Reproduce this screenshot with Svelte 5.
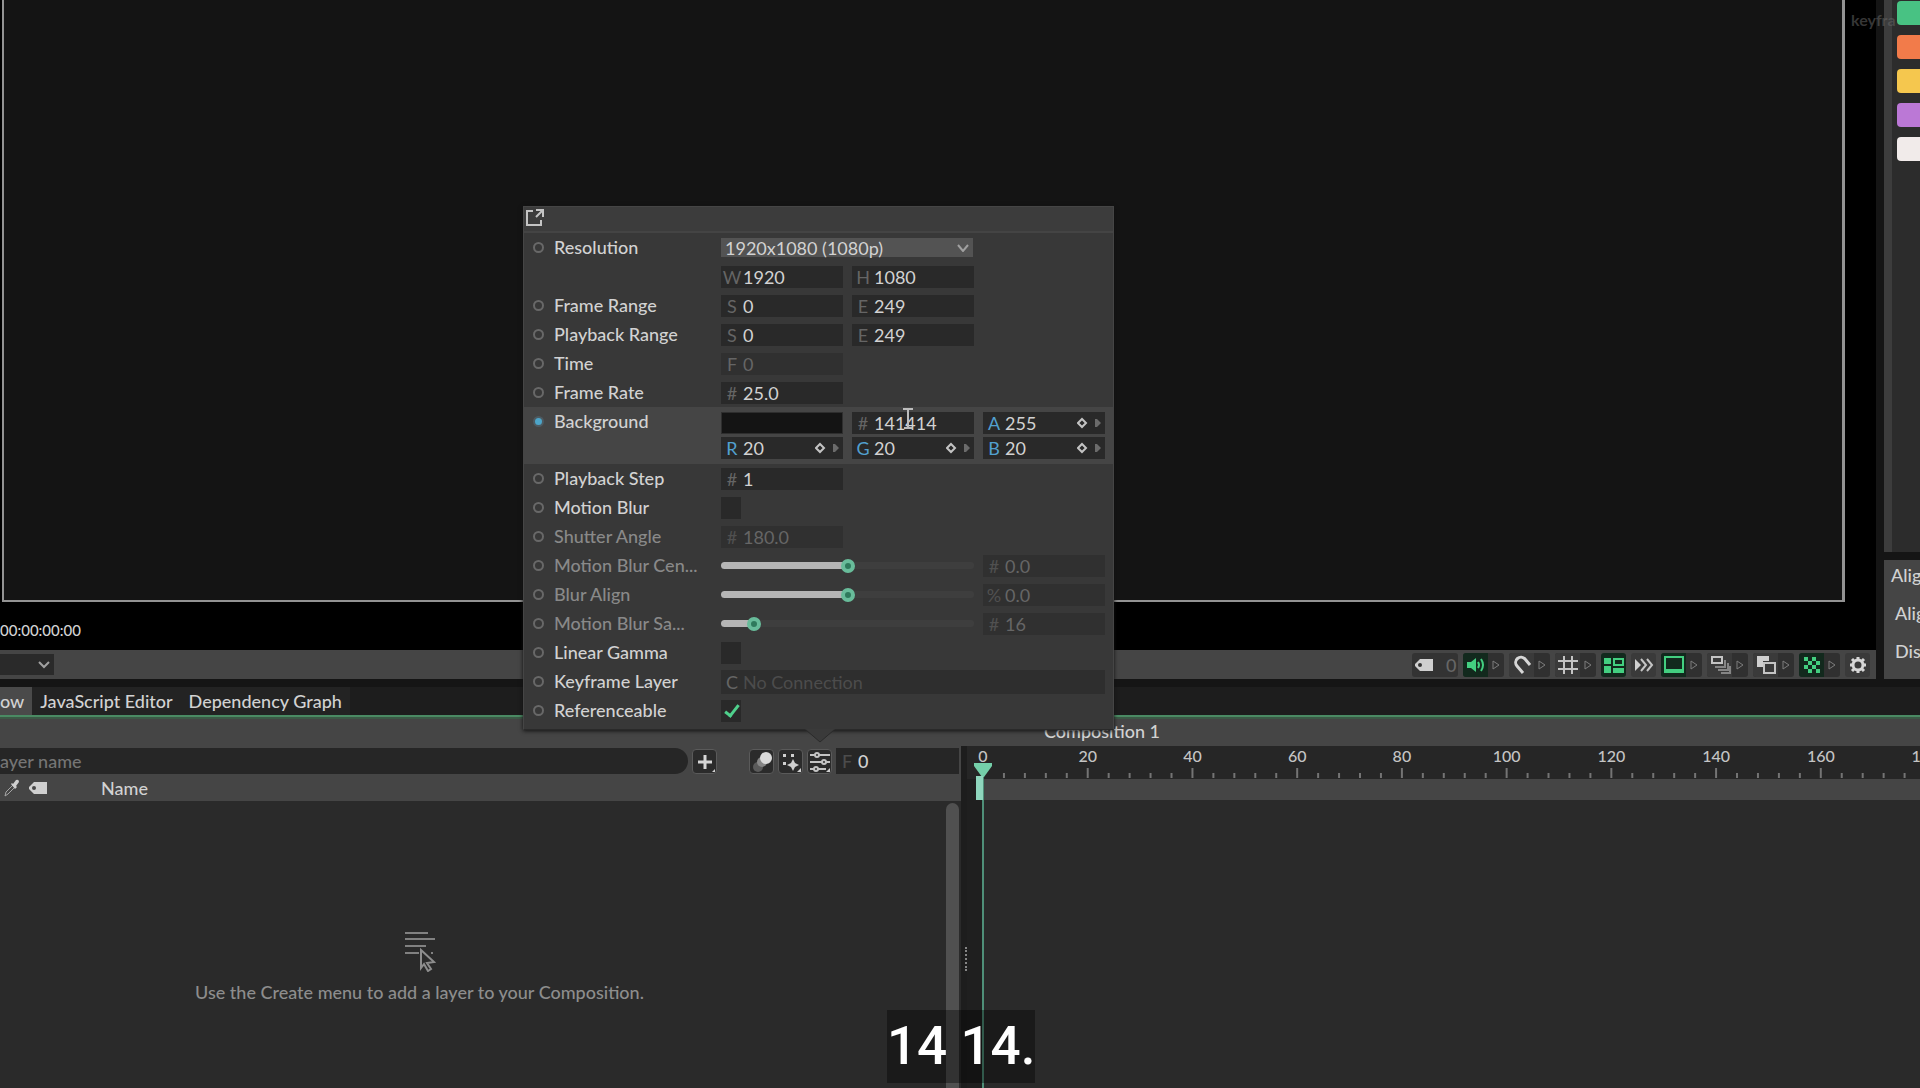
<script lang="ts">
  type Part = {
    kind: "num" | "select" | "swatch" | "check" | "slider" | "link";
    prefix?: string;
    value?: string;
    on?: boolean;
    keyed?: boolean;
    percent?: number;
  };

  type Row = {
    label: string;
    dim?: boolean;
    active?: boolean;
    lines: Part[][];
  };

  const num = (prefix: string, value: string, keyed = false): Part => ({
    kind: "num",
    prefix,
    value,
    keyed,
  });

  const rows: Row[] = [
    {
      label: "Resolution",
      lines: [[{ kind: "select", value: "1920x1080 (1080p)" }], [num("W", "1920"), num("H", "1080")]],
    },
    { label: "Frame Range", lines: [[num("S", "0"), num("E", "249")]] },
    { label: "Playback Range", lines: [[num("S", "0"), num("E", "249")]] },
    { label: "Time", lines: [[{ ...num("F", "0"), on: false }]] },
    { label: "Frame Rate", lines: [[num("#", "25.0")]] },
    {
      label: "Background",
      active: true,
      lines: [
        [{ kind: "swatch", value: "#141414" }, num("#", "141414"), num("A", "255", true)],
        [num("R", "20", true), num("G", "20", true), num("B", "20", true)],
      ],
    },
    { label: "Playback Step", lines: [[num("#", "1")]] },
    { label: "Motion Blur", lines: [[{ kind: "check", on: false }]] },
    { label: "Shutter Angle", dim: true, lines: [[num("#", "180.0")]] },
    { label: "Motion Blur Cen...", dim: true, lines: [[{ kind: "slider", percent: 50 }, num("#", "0.0")]] },
    { label: "Blur Align", dim: true, lines: [[{ kind: "slider", percent: 50 }, num("%", "0.0")]] },
    { label: "Motion Blur Sa...", dim: true, lines: [[{ kind: "slider", percent: 11 }, num("#", "16")]] },
    { label: "Linear Gamma", lines: [[{ kind: "check", on: false }]] },
    { label: "Keyframe Layer", lines: [[{ kind: "link", prefix: "C", value: "No Connection" }]] },
    { label: "Referenceable", lines: [[{ kind: "check", on: true }]] },
  ];

  const tools = [
    { name: "sound", arrow: true, on: true },
    { name: "snap", arrow: true },
    { name: "grid", arrow: true },
    { name: "layout", on: true },
    { name: "speed" },
    { name: "screen", arrow: true, on: true },
    { name: "stack", arrow: true },
    { name: "overlap", arrow: true },
    { name: "checker", arrow: true, on: true },
    { name: "gear" },
  ];

  const swatches = ["#48c283", "#f27b4a", "#f5c74e", "#bb78d6", "#f1ebea"];

  // frames that fit in the full width of the ruler
  const visibleFrames = 182;
  const ticks = Array.from({ length: 46 }, (_, i) => i * 4);
  const at = (frame: number) => `${(frame / visibleFrames) * 100}%`;
</script>

<div class="app">
  <section class="top">
    <div class="viewer">
      <div class="stage">
        <div class="frame"></div>
      </div>
      <div class="timecode">00:00:00:00</div>
      <div class="viewbar">
        <button class="zoom" aria-label="Zoom">
          <svg width="12" height="8" viewBox="0 0 12 8"><path d="M1 1l5 5 5-5" /></svg>
        </button>
        <div class="tools">
          <div class="tool tagtool">
            <svg width="20" height="14" viewBox="0 0 20 14">
              <path class="fill" fill-rule="evenodd" d="M6 1h13v12H6L1 8V6zM6 5a2 2 0 100 4 2 2 0 000-4z" />
            </svg>
            <span>0</span>
          </div>
          {#each tools as tool}
            <button class="tool" class:on={tool.on} class:arrow={tool.arrow} aria-label={tool.name}>
              <span class="glyph">
                <svg width="22" height="22" viewBox="0 0 22 22">
                  {#if tool.name === "sound"}
                    <path class="fill" d="M2 8h4l5-4v14l-5-4H2z" />
                    <path class="wave" d="M13 8q2 3 0 6M16 5q4 6 0 12" />
                  {:else if tool.name === "snap"}
                    <path class="thick" d="M12 19L6 12a4 4 0 018-7l5 6" />
                  {:else if tool.name === "grid"}
                    <path class="mid" d="M7 2v18M15 2v18M1 7h20M1 15h20" />
                  {:else if tool.name === "layout"}
                    <path class="fill" d="M1 4h7v6H1zM1 12h7v7H1zM10 14h11v5H10z" />
                    <path class="mid" d="M11 5h9v6h-9z" />
                  {:else if tool.name === "speed"}
                    <path class="fill" d="M2 5l6 6-6 6z" />
                    <path class="mid" d="M8 5l5 6-5 6M14 5l5 6-5 6" />
                  {:else if tool.name === "screen"}
                    <path class="mid" d="M2 3h18v15H2z" />
                    <path class="fill" d="M2 15h18v4H2z" />
                  {:else if tool.name === "stack"}
                    <path class="mid" d="M3 3h10v6H3z" />
                    <path class="faint" d="M6 13h10V6M9 16h10V9M12 19h9v-7" />
                  {:else if tool.name === "overlap"}
                    <path class="fill" d="M2 2h12v5H8v6H2z" />
                    <path class="mid" d="M9 9h11v10H9z" />
                  {:else if tool.name === "checker"}
                    <path
                      class="fill"
                      d="M3 3h4v4H3zM11 3h4v4h-4zM7 7h4v4H7zM15 7h4v4h-4zM3 11h4v4H3zM11 11h4v4h-4zM7 15h4v4H7zM15 15h4v4h-4z"
                    />
                  {:else}
                    <circle class="thick" cx="11" cy="11" r="5" />
                    <path class="thick" d="M11 3v3M11 16v3M3 11h3M16 11h3M5 5l2 2M15 15l2 2M5 17l2-2M15 7l2-2" />
                  {/if}
                </svg>
              </span>
              {#if tool.arrow}
                <svg class="more" width="8" height="10" viewBox="0 0 8 10"><path d="M1 1l6 4-6 4z" /></svg>
              {/if}
            </button>
          {/each}
        </div>
      </div>
    </div>
    <aside class="side">
      <div class="palette">
        {#each swatches as color}
          <button class="color" style:background={color} aria-label="Colour {color}"></button>
        {/each}
      </div>
      <div class="align">
        <div class="title">Alig</div>
        <div>Alig</div>
        <div>Dis</div>
      </div>
    </aside>
  </section>

  <section class="bottom">
    <nav class="tabs">
      <button class="tab current">ow</button>
      <button class="tab">JavaScript Editor</button>
      <button class="tab">Dependency Graph</button>
    </nav>

    <div class="panes">
      <div class="comp">Composition 1</div>
      <div class="layers">
        <div class="layerbar">
          <input class="search" type="text" placeholder="ayer name" aria-label="Layer name" />
          <button class="icon" aria-label="Create">
            <svg width="24" height="24" viewBox="0 0 24 24">
              <path class="thick" d="M12 5v14M5 12h14" /><path class="fill" d="M22 19v3h-3z" />
            </svg>
          </button>
          <button class="icon spaced" aria-label="Motion blur">
            <svg width="24" height="24" viewBox="0 0 24 24">
              <circle cx="8" cy="17" r="5" fill="#5a5a5a" stroke="none" />
              <circle cx="12" cy="12" r="5" fill="#868686" stroke="none" />
              <circle cx="16" cy="8" r="6" fill="#dadada" stroke="none" />
            </svg>
          </button>
          <button class="icon" aria-label="Particles">
            <svg width="24" height="24" viewBox="0 0 24 24">
              <path
                class="fill"
                d="M4 4h3v3H4zM12 4h3v3h-3zM4 12h3v3H4zM14 9l2 4 4 2-4 2-2 4-2-4-4-2 4-2zM22 18v4h-4z"
              />
            </svg>
          </button>
          <button class="icon" aria-label="Composition settings">
            <svg width="24" height="24" viewBox="0 0 24 24">
              <path class="mid" d="M2 5h20M2 12h20M2 19h16" />
              <circle class="knob" cx="9" cy="5" r="2" />
              <circle class="knob" cx="16" cy="12" r="2" />
              <circle class="knob" cx="8" cy="19" r="2" />
              <path class="fill" d="M22 18v4h-4z" />
            </svg>
          </button>
          <label class="num current-frame"><span>F</span><input type="text" value="0" /></label>
        </div>
        <div class="columns">
          <svg width="16" height="18" viewBox="0 0 16 18">
            <path d="M1 17l1-4 7-7 2 2-7 7z" />
            <path class="fill" d="M7 5l1-1 1 1 3-4q3-1 3 2l-3 4 1 1-2 2z" />
          </svg>
          <svg class="tag" width="20" height="14" viewBox="0 0 20 14">
            <path class="fill" fill-rule="evenodd" d="M6 1h13v12H6L1 8V6zM6 5a2 2 0 100 4 2 2 0 000-4z" />
          </svg>
          <span>Name</span>
        </div>
        <div class="list">
          <div class="empty">
            <svg width="32" height="42" viewBox="0 0 32 42">
              <path class="soft" d="M1 3h23M1 9h30M1 16h21M1 23h14M27 23h2" />
              <path class="pointer" d="M17 20l13 12-7 1 4 6-3 2-4-7-3 4z" />
            </svg>
            <p>Use the Create menu to add a layer to your Composition.</p>
          </div>
          <div class="scroll"></div>
        </div>
      </div>
      <div class="split"><i></i></div>
      <div class="timeline">
        <svg class="ruler" height="33">
          <svg x="16" width="100%" height="33" overflow="visible">
            {#each ticks as frame}
              <line x1={at(frame)} x2={at(frame)} y1={frame % 20 ? 27 : 22} y2="32" />
              {#if frame % 20 === 0}
                <text x={at(frame)} y="16">{frame}</text>
              {/if}
            {/each}
          </svg>
        </svg>
        <div class="range"></div>
        <div class="tracks"></div>
        <svg class="playhead" width="20" height="100%">
          <rect x="9" y="14" width="2" height="100%" fill="#4f8f78" />
          <path d="M1 0h18v3l-8 11H9L1 3z" fill="#74cfa9" />
          <rect x="3" y="13" width="7" height="24" fill="#8fd6bd" />
        </svg>
      </div>
    </div>
  </section>

  <div class="popup">
    <div class="pophead">
      <button aria-label="Open in window">
        <svg width="18" height="18" viewBox="0 0 18 18">
          <path class="mid" d="M7 2H1v14h14v-5M10 1h7v7M17 1l-7 7" />
        </svg>
      </button>
    </div>
    {#each rows as row}
      <div class="row" class:dim={row.dim} class:active={row.active}>
        <i class="dot"></i>
        <span class="name">{row.label}</span>
        <div class="lines">
          {#each row.lines as line}
            <div class="line">
              {#each line as part}
                {#if part.kind === "num"}
                  <label class="num" class:keyed={part.keyed} class:off={part.on === false}>
                    <span>{part.prefix}</span>
                    <input type="text" value={part.value} />
                    {#if part.keyed}
                      <svg width="24" height="12" viewBox="0 0 24 12">
                        <path class="mid" d="M5 2l4 4-4 4-4-4z" />
                        <path class="tip" d="M18 2h2l4 4-4 4h-2z" />
                      </svg>
                    {/if}
                  </label>
                {:else if part.kind === "select"}
                  <div class="select">
                    <select aria-label={row.label}><option>{part.value}</option></select>
                    <svg width="12" height="8" viewBox="0 0 12 8"><path d="M1 1l5 6 5-6" /></svg>
                  </div>
                {:else if part.kind === "swatch"}
                  <button class="swatch" style:background={part.value} aria-label="Background colour"></button>
                {:else if part.kind === "check"}
                  <input type="checkbox" checked={part.on} aria-label={row.label} />
                {:else if part.kind === "slider"}
                  <input
                    class="slider"
                    type="range"
                    value={part.percent}
                    style:--fill="{part.percent}%"
                    aria-label={row.label}
                  />
                {:else}
                  <label class="num link"><span>{part.prefix}</span><input type="text" value={part.value} /></label>
                {/if}
              {/each}
            </div>
          {/each}
        </div>
      </div>
    {/each}
    <svg class="notch" width="30" height="15" viewBox="0 0 30 15">
      <path d="M0 0h30L15 13z" fill="#3a3a3a" stroke="none" />
      <path d="M1 1l14 12L29 1" stroke="#2a2a2a" />
    </svg>
  </div>

  <svg class="cursor" width="12" height="22" viewBox="0 0 12 22">
    <path d="M1 1h10M6 1v18M2 20h8" />
  </svg>
  <div class="watermark">keyfra</div>
  <div class="caption">14 14.</div>
</div>

<style>
  :global(body) {
    background: #151515;
  }

  .app {
    position: relative;
    display: grid;
    grid-template-rows: 679fr 401fr;
    gap: 8px;
    height: 100vh;
    overflow: hidden;
    background: #151515;
    color: #d2d2d2;
    font-family: Lato, "Liberation Sans", sans-serif;
    font-size: 18px;
    font-weight: 500;
    line-height: 24px;
  }

  button,
  input,
  select {
    box-sizing: border-box;
    margin: 0;
    padding: 0;
    border: 0;
    background: none;
    color: inherit;
    font: inherit;
  }

  svg {
    display: block;
    flex: none;
    fill: none;
    stroke: #a5a5a5;
    stroke-width: 1;
  }

  .fill {
    fill: #cfcfcf;
    stroke: none;
  }

  .mid {
    stroke: #c4c4c4;
    stroke-width: 2;
  }

  .wave {
    stroke: #43cf80;
    stroke-width: 2;
  }

  .thick {
    stroke: #d6d6d6;
    stroke-width: 3;
  }

  .faint {
    stroke: #858585;
    stroke-width: 2;
  }

  .top {
    display: flex;
    min-height: 0;
  }

  .viewer {
    flex: 1;
    display: flex;
    flex-direction: column;
    background: #000;
  }

  .stage {
    flex: 1;
    display: flex;
    padding: 0 31px 0 2px;
  }

  .frame {
    flex: 1;
    border: solid #939393;
    border-width: 0 3px 2px 2px;
    background: #141414;
  }

  .timecode {
    height: 48px;
    box-sizing: border-box;
    padding-top: 16px;
    font-size: 15px;
  }

  .viewbar {
    display: flex;
    justify-content: space-between;
    align-items: center;
    height: 29px;
    padding-right: 6px;
    background: #454545;
  }

  .zoom {
    display: flex;
    justify-content: flex-end;
    align-items: center;
    width: 54px;
    height: 21px;
    padding-right: 4px;
    background: #2a2a2a;
  }

  .zoom svg,
  .select svg {
    stroke: #a0a0a0;
    stroke-width: 2;
  }

  .tools {
    display: flex;
    gap: 5px;
  }

  .tool {
    display: flex;
    align-items: center;
    gap: 4px;
    width: 25px;
    height: 24px;
    border-radius: 3px;
    background: #303030;
    overflow: hidden;
  }

  .tool.arrow {
    width: 41px;
  }

  .tagtool {
    width: 46px;
    gap: 12px;
    padding-left: 2px;
    box-sizing: border-box;
    color: #666;
    background: #333;
  }

  .glyph {
    display: flex;
    justify-content: center;
    align-items: center;
    width: 25px;
    height: 24px;
    background: #3a3a3a;
  }

  .on .glyph {
    background: #12291d;
  }

  .on .glyph .fill {
    fill: #43cf80;
  }

  .on .glyph .mid {
    stroke: #43cf80;
  }

  .more {
    stroke: #7c7c7c;
  }

  .side {
    display: flex;
    flex-direction: column;
    gap: 8px;
    width: 36px;
    margin-left: 8px;
    overflow: hidden;
  }

  .palette {
    flex: 1;
    display: flex;
    flex-direction: column;
    gap: 10px;
    padding: 1px 0 0 5px;
    border-left: 8px solid #3d3d3d;
    background: #2c2c2c;
  }

  .color {
    width: 32px;
    height: 24px;
    border-radius: 4px;
  }

  .align {
    display: flex;
    flex-direction: column;
    gap: 14px;
    height: 119px;
    box-sizing: border-box;
    padding: 3px 0 0 11px;
    background: #454545;
  }

  .align .title {
    margin-left: -4px;
  }

  .bottom {
    display: flex;
    flex-direction: column;
    min-height: 0;
  }

  .tabs {
    display: flex;
    height: 28px;
    border-bottom: 2px solid #4a8a63;
    background: #1d1d1d;
  }

  .tab {
    padding: 0 8px;
    background: #232323;
  }

  .tab.current {
    padding-left: 0;
    background: #4a4a4a;
  }

  .panes {
    flex: 1;
    display: grid;
    grid-template: 27px 1fr / 961px 6px 1fr;
    border-top: 2px solid #3c5946;
    background: #454545;
    min-height: 0;
  }

  .comp {
    grid-column: 1 / 4;
    padding-left: 1044px;
  }

  .layers {
    display: flex;
    flex-direction: column;
    padding-top: 1px;
  }

  .layerbar {
    display: flex;
    align-items: center;
    gap: 4px;
    height: 28px;
    padding-right: 2px;
  }

  .search {
    flex: 1;
    height: 26px;
    border-radius: 0 13px 13px 0;
    background: #262626;
  }

  .search::placeholder {
    color: #757575;
    opacity: 1;
  }

  .icon {
    width: 25px;
    height: 25px;
    border: 1px solid #5a5a5a;
    border-radius: 4px;
    background: #2b2b2b;
    overflow: hidden;
  }

  .spaced {
    margin-left: 28px;
  }

  .knob {
    fill: #2b2b2b;
    stroke: #c4c4c4;
    stroke-width: 2;
  }

  .columns {
    display: flex;
    align-items: center;
    height: 26px;
    padding-left: 4px;
  }

  .columns span {
    margin-left: 53px;
  }

  .tag {
    margin-left: 8px;
  }

  .list {
    flex: 1;
    display: flex;
    background: #2a2a2a;
  }

  .empty {
    flex: 1;
    display: flex;
    flex-direction: column;
    align-items: center;
    padding: 129px 0 0;
    margin-right: 107px;
    color: #8d8d8d;
  }

  .empty p {
    margin: 8px 0 0;
  }

  .soft {
    stroke: #818181;
    stroke-width: 2;
  }

  .pointer {
    fill: #2a2a2a;
    stroke: #8d8d8d;
    stroke-width: 2;
  }

  .scroll {
    width: 13px;
    margin: 2px 2px 0 0;
    border-radius: 7px 7px 0 0;
    background: #505050;
  }

  .split {
    display: flex;
    justify-content: flex-end;
    padding-top: 201px;
    background: #1d1d1d;
  }

  .split i {
    width: 2px;
    height: 24px;
    border-right: 2px dotted #858585;
  }

  .timeline {
    position: relative;
    display: flex;
    flex-direction: column;
    min-width: 0;
    background: #1f1f1f;
  }

  .ruler {
    width: 100%;
    background: #262626;
    overflow: hidden;
  }

  .ruler line {
    stroke: #747474;
    stroke-width: 2;
  }

  .ruler text {
    fill: #c4c4c4;
    stroke: none;
    font-size: 16px;
    text-anchor: middle;
  }

  .range {
    height: 21px;
    margin-left: 16px;
    background: #454545;
  }

  .tracks {
    flex: 1;
    margin-left: 16px;
    background: #2a2a2a;
  }

  .playhead {
    position: absolute;
    top: 17px;
    left: 6px;
    stroke: none;
  }

  .popup {
    position: absolute;
    left: 523px;
    top: 206px;
    width: 591px;
    box-sizing: border-box;
    padding-bottom: 4px;
    border: 1px solid #454545;
    border-bottom-color: #2a2a2a;
    background: #383838;
    box-shadow: 0 1px 4px #111;
  }

  .pophead {
    height: 24px;
    padding-left: 2px;
    border-bottom: 2px solid #444;
    background: #3c3c3c;
  }

  .pophead button {
    display: block;
    padding-top: 2px;
  }

  .row {
    display: flex;
    padding-left: 9px;
  }

  .row.active {
    padding-bottom: 4px;
    background: #454545;
  }

  .active .lines {
    padding-top: 3px;
  }

  .dot {
    width: 7px;
    height: 7px;
    margin: 9px 10px 0 0;
    border: 2px solid #686868;
    border-radius: 50%;
  }

  .active .dot {
    border-color: #4d5a61;
    background: #4da5c9;
  }

  .name {
    width: 167px;
    line-height: 29px;
  }

  .dim .name {
    color: #898989;
  }

  .lines {
    width: 384px;
    font-weight: 400;
  }

  .line {
    display: flex;
    align-items: center;
    gap: 9px;
    height: 29px;
  }

  .active .line {
    height: 25px;
  }

  .num {
    display: flex;
    align-items: center;
    width: 122px;
    height: 22px;
    box-sizing: border-box;
    background: #292929;
    color: #d2d2d2;
  }

  .num span {
    width: 22px;
    flex: none;
    text-align: center;
    color: #656565;
  }

  .num input {
    flex: 1;
    min-width: 0;
    height: 22px;
  }

  .num svg {
    margin-right: 4px;
  }

  .tip {
    fill: #6b6b6b;
    stroke: none;
  }

  .keyed span {
    color: #52a0d0;
  }

  .off,
  .dim .num,
  .link {
    background: #303030;
    color: #666;
  }

  .dim .num span {
    color: #505050;
  }

  .link {
    width: 384px;
    height: 24px;
    background: #2e2e2e;
    color: #4c4c4c;
  }

  .current-frame {
    width: 123px;
    height: 26px;
    background: #262626;
  }

  .current-frame span {
    color: #4c4c4c;
  }

  .select {
    display: flex;
    align-items: center;
    width: 252px;
    height: 19px;
    box-sizing: border-box;
    padding-right: 4px;
    background: #535353;
  }

  .select select {
    flex: 1;
    height: 24px;
    padding-left: 4px;
    appearance: none;
  }

  .swatch {
    width: 122px;
    height: 22px;
    border: 1px solid #2e2e2e;
  }

  input[type="checkbox"] {
    width: 20px;
    height: 22px;
    appearance: none;
    background: #292929;
  }

  input[type="checkbox"]:checked::before {
    content: "";
    display: block;
    width: 5px;
    height: 12px;
    margin: 2px 0 0 7px;
    border: solid #4fd08c;
    border-width: 0 3px 3px 0;
    transform: rotate(38deg);
  }

  .slider {
    width: 253px;
    height: 22px;
    appearance: none;
  }

  .slider::-webkit-slider-runnable-track {
    height: 7px;
    border-radius: 4px;
    background: linear-gradient(to right, #b5b5b5 var(--fill), #3e3e3e var(--fill));
  }

  .slider::-webkit-slider-thumb {
    width: 14px;
    height: 14px;
    margin-top: -3px;
    appearance: none;
    border: 4px solid #68bc9a;
    border-radius: 50%;
    background: #2f7a5c;
  }

  .notch {
    position: absolute;
    left: 281px;
    top: 100%;
  }

  .cursor {
    position: absolute;
    left: 902px;
    top: 408px;
    stroke: #bdbdbd;
    stroke-width: 2;
  }

  .watermark {
    position: absolute;
    left: 1851px;
    top: 8px;
    color: #6668;
    font-weight: 700;
    font-size: 16px;
  }

  .caption {
    position: absolute;
    left: 887px;
    top: 1010px;
    background: #00000060;
    color: #fff;
    font-family: Roboto, "Liberation Sans", sans-serif;
    font-weight: 500;
    font-size: 53px;
    line-height: 73px;
  }
</style>
